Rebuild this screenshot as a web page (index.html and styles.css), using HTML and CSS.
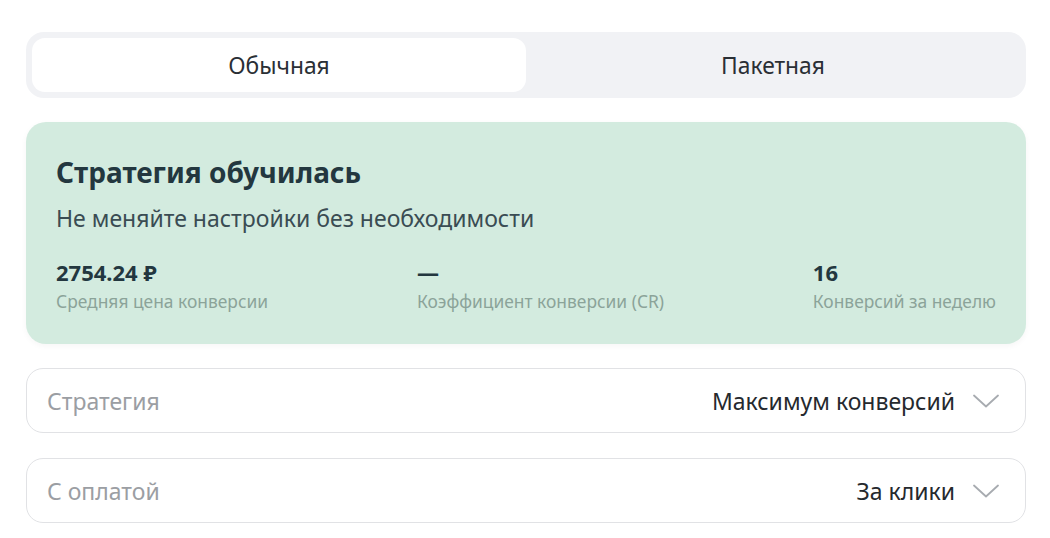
FILE: index.html
```html
<!DOCTYPE html>
<html lang="ru">
<head>
  <meta charset="UTF-8">
  <title>Стратегия</title>
  <link rel="stylesheet" href="styles.css">
</head>
<body>

  <div class="page">
    <div class="tabs">
      <div class="tab active">Обычная</div>
      <div class="tab">Пакетная</div>
    </div>

    <div class="status-card">
      <h2>Стратегия обучилась</h2>
      <div class="subtitle">Не меняйте настройки без необходимости</div>
      <div class="stats">
        <div class="stat">
          <div class="value">2754.24 ₽</div>
          <div class="label">Средняя цена конверсии</div>
        </div>
        <div class="stat">
          <div class="value">—</div>
          <div class="label">Коэффициент конверсии (CR)</div>
        </div>
        <div class="stat">
          <div class="value">16</div>
          <div class="label">Конверсий за неделю</div>
        </div>
      </div>
    </div>

    <div class="select">
      <span class="select-label">Стратегия</span>
      <span class="select-value">Максимум конверсий</span>
      <svg class="chevron" width="26" height="14" viewBox="0 0 26 14"><path d="M1 1.5 L13 12.5 L25 1.5" fill="none" stroke="#a7abb0" stroke-width="1.8" stroke-linecap="round" stroke-linejoin="round"/></svg>
    </div>

    <div class="select">
      <span class="select-label">С оплатой</span>
      <span class="select-value">За клики</span>
      <svg class="chevron" width="26" height="14" viewBox="0 0 26 14"><path d="M1 1.5 L13 12.5 L25 1.5" fill="none" stroke="#a7abb0" stroke-width="1.8" stroke-linecap="round" stroke-linejoin="round"/></svg>
    </div>
  </div>

</body>
</html>
```

FILE: styles.css
```css
body {
  margin: 0;
  font-family: "Noto Sans", "Open Sans", sans-serif;
  background-color: #fff;
  color: #21262b;
}

.page {
  width: 1000px;
  padding: 32px 0 0 26px;
}

.tabs {
  display: flex;
  padding: 6px;
  background-color: #f1f2f5;
  border-radius: 18px;
}

.tab {
  flex: 1;
  height: 54px;
  display: flex;
  align-items: center;
  justify-content: center;
  font-size: 22.8px;
  color: #2a2f35;
  border-radius: 13px;
}

.tab.active {
  background-color: #fff;
}

.status-card {
  margin-top: 24px;
  height: 222px;
  box-sizing: border-box;
  padding: 30px 30px 0 30px;
  background-color: #d3ebdf;
  border-radius: 20px;
  box-shadow: 0 2px 6px rgba(0, 0, 0, 0.04);
}

.status-card h2 {
  margin: 0;
  font-size: 28px;
  font-weight: 700;
  line-height: 40px;
  color: #23373f;
}

.subtitle {
  margin-top: 12px;
  font-size: 23px;
  line-height: 28px;
  color: #3a4c53;
}

.stats {
  display: flex;
  justify-content: space-between;
  margin-top: 26px;
}

.value {
  font-size: 22px;
  font-weight: 700;
  line-height: 28px;
  color: #23373f;
}

.label {
  margin-top: 3px;
  font-size: 17.4px;
  line-height: 24px;
  color: #8ba399;
}

.select {
  display: flex;
  align-items: center;
  height: 65px;
  box-sizing: border-box;
  margin-top: 24px;
  padding: 0 26px 0 20px;
  border: 1.5px solid #e1e2e5;
  border-radius: 17px;
  font-size: 23px;
}

.select + .select {
  margin-top: 25px;
}

.select-label {
  flex: 1;
  color: #9b9ea3;
}

.select-value {
  color: #25292e;
}

.chevron {
  margin-left: 18px;
}
```
